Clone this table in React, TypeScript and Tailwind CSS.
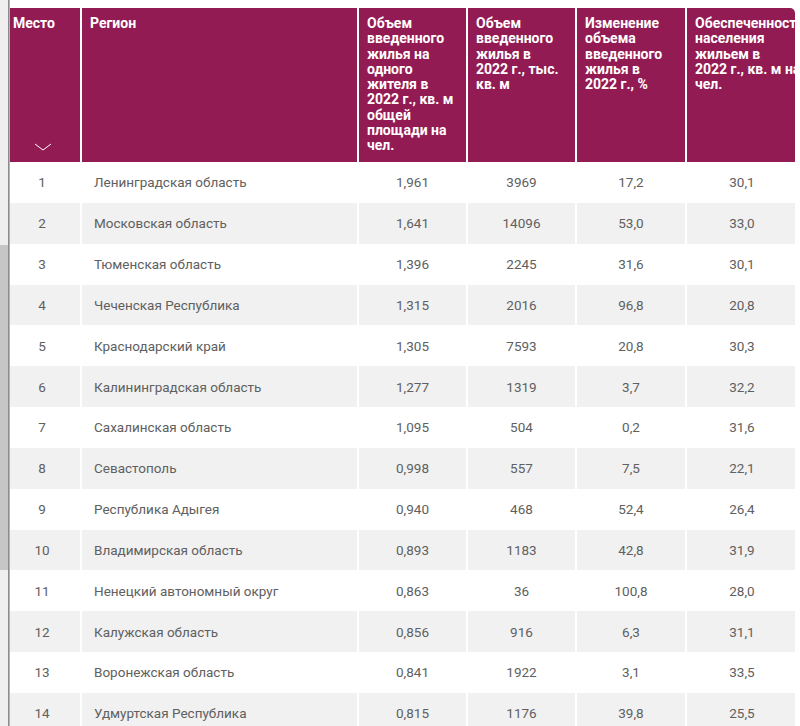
import React from "react"

const headers: string[][] = [
  ["Объем", "введенного", "жилья на", "одного", "жителя в", "2022 г., кв. м", "общей", "площади на", "чел."],
  ["Объем", "введенного", "жилья в", "2022 г., тыс.", "кв. м"],
  ["Изменение", "объема", "введенного", "жилья в", "2022 г., %"],
  ["Обеспеченность", "населения", "жильем в", "2022 г., кв. м на", "чел."],
]

const rows: [number, string, string, string, string, string][] = [
  [1, "Ленинградская область", "1,961", "3969", "17,2", "30,1"],
  [2, "Московская область", "1,641", "14096", "53,0", "33,0"],
  [3, "Тюменская область", "1,396", "2245", "31,6", "30,1"],
  [4, "Чеченская Республика", "1,315", "2016", "96,8", "20,8"],
  [5, "Краснодарский край", "1,305", "7593", "20,8", "30,3"],
  [6, "Калининградская область", "1,277", "1319", "3,7", "32,2"],
  [7, "Сахалинская область", "1,095", "504", "0,2", "31,6"],
  [8, "Севастополь", "0,998", "557", "7,5", "22,1"],
  [9, "Республика Адыгея", "0,940", "468", "52,4", "26,4"],
  [10, "Владимирская область", "0,893", "1183", "42,8", "31,9"],
  [11, "Ненецкий автономный округ", "0,863", "36", "100,8", "28,0"],
  [12, "Калужская область", "0,856", "916", "6,3", "31,1"],
  [13, "Воронежская область", "0,841", "1922", "3,1", "33,5"],
  [14, "Удмуртская Республика", "0,815", "1176", "39,8", "25,5"],
]

const cols = "grid grid-cols-[70px_275px_107px_107px_108px_130px] gap-x-[2px]"

export default function App() {
  return (
    <div className="flex h-[726px] w-[800px] overflow-hidden bg-white font-['Roboto',sans-serif]">
      {/* scrollbar strip */}
      <div className="flex w-[8px] shrink-0 flex-col bg-[#efefef]">
        <div className="h-[245px]" />
        <div className="h-[325px] bg-[#c6c6c6]" />
      </div>
      <div className="w-[2px] shrink-0 bg-gradient-to-r from-[#7a7a7a] to-[#c8c8c8]" />

      <div className="w-[785px] shrink-0 pt-[8px]">
        <div className="overflow-hidden rounded-tr-[5px]">
          {/* header */}
          <div className={`${cols} h-[154px] text-[14px] font-bold leading-[15.3px] text-white`}>
            <div className="relative bg-[#931b54] pl-[3px] pt-[8px]">
              Место
              <svg className="absolute bottom-[11px] left-[24px]" width="18" height="8" viewBox="0 0 18 8" fill="none">
                <path d="M1 1l8 6 8-6" stroke="white" strokeWidth="1" />
              </svg>
            </div>
            <div className="bg-[#931b54] pl-[8px] pt-[8px]">Регион</div>
            {headers.map((lines, i) => (
              <div key={i} className="whitespace-nowrap bg-[#931b54] pl-[8px] pt-[8px]">
                {lines.map((l, j) => (
                  <div key={j}>{l}</div>
                ))}
              </div>
            ))}
          </div>

          {/* body */}
          {rows.map((r, i) => {
            const bg = i % 2 === 1 ? "bg-[#f1f1f1]" : "bg-white"
            return (
              <div key={r[0]} className={`${cols} h-[40.85px] text-[13.5px] text-[#606060]`}>
                <div className={`${bg} flex items-center justify-center pr-[6px]`}>{r[0]}</div>
                <div className={`${bg} flex items-center pl-[12px]`}>{r[1]}</div>
                <div className={`${bg} flex items-center justify-center`}>{r[2]}</div>
                <div className={`${bg} flex items-center justify-center`}>{r[3]}</div>
                <div className={`${bg} flex items-center justify-center`}>{r[4]}</div>
                <div className={`${bg} flex items-center justify-center pr-[20px]`}>{r[5]}</div>
              </div>
            )
          })}
        </div>
      </div>
    </div>
  )
}
